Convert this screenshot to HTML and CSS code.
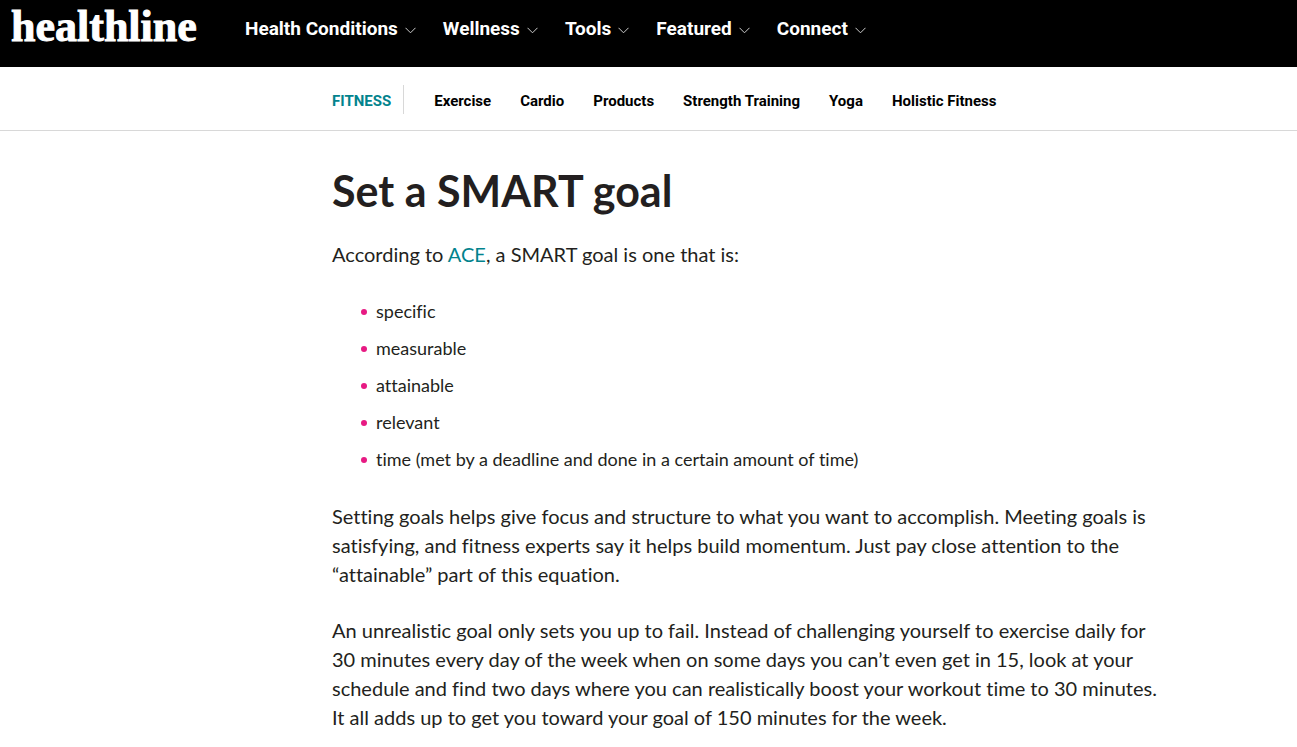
FILE: index.html
```html
<!DOCTYPE html>
<html lang="en">
<head>
<meta charset="utf-8">
<meta name="viewport" content="width=device-width, initial-scale=1">
<title>Set a SMART goal</title>
<link rel="stylesheet" href="styles.css">
</head>
<body>
<header class="site-header">
  <a class="logo" href="#">healthline</a>
  <nav class="main-nav" aria-label="Main">
    <button class="menu" type="button">Health Conditions<svg class="chevron" viewBox="0 0 11 7" aria-hidden="true"><path d="M.5 .8 5.5 5.8 10.5 .8"/></svg></button>
    <button class="menu" type="button">Wellness<svg class="chevron" viewBox="0 0 11 7" aria-hidden="true"><path d="M.5 .8 5.5 5.8 10.5 .8"/></svg></button>
    <button class="menu" type="button">Tools<svg class="chevron" viewBox="0 0 11 7" aria-hidden="true"><path d="M.5 .8 5.5 5.8 10.5 .8"/></svg></button>
    <button class="menu" type="button">Featured<svg class="chevron" viewBox="0 0 11 7" aria-hidden="true"><path d="M.5 .8 5.5 5.8 10.5 .8"/></svg></button>
    <button class="menu" type="button">Connect<svg class="chevron" viewBox="0 0 11 7" aria-hidden="true"><path d="M.5 .8 5.5 5.8 10.5 .8"/></svg></button>
  </nav>
</header>
<nav class="sub-nav" aria-label="Fitness">
  <a class="section" href="#">FITNESS</a>
  <a class="topic" href="#">Exercise</a>
  <a class="topic" href="#">Cardio</a>
  <a class="topic" href="#">Products</a>
  <a class="topic" href="#">Strength Training</a>
  <a class="topic" href="#">Yoga</a>
  <a class="topic" href="#">Holistic Fitness</a>
</nav>
<main class="article">
  <h1 class="title">Set a SMART goal</h1>
  <p class="text">According to <a class="link" href="#">ACE</a>, a SMART goal is one that is:</p>
  <ul class="list">
    <li class="item">specific</li>
    <li class="item">measurable</li>
    <li class="item">attainable</li>
    <li class="item">relevant</li>
    <li class="item">time (met by a deadline and done in a certain amount of time)</li>
  </ul>
  <p class="text">Setting goals helps give focus and structure to what you want to accomplish. Meeting goals is satisfying, and fitness experts say it helps build momentum. Just pay close attention to the “attainable” part of this equation.</p>
  <p class="text">An unrealistic goal only sets you up to fail. Instead of challenging yourself to exercise daily for 30 minutes every day of the week when on some days you can’t even get in 15, look at your schedule and find two days where you can realistically boost your workout time to 30 minutes. It all adds up to get you toward your goal of 150 minutes for the week.</p>
</main>
</body>
</html>
```
FILE: styles.css
```css
* { box-sizing: border-box; }
body {
  margin: 0;
  background: #fff;
  color: #231f20;
  font-family: Lato, "Liberation Sans", sans-serif;
  font-variant-ligatures: none;
}
a { text-decoration: none; }
.site-header {
  display: flex;
  align-items: flex-start;
  height: 67px;
  padding: 4px 11px 0;
  background: #000;
}
.logo {
  width: 234px;
  color: #fff;
  font: bold 44px/46px "Liberation Serif", serif;
  -webkit-text-stroke: 1px #fff;
}
.main-nav {
  display: flex;
  gap: 27px;
  padding-top: 13px;
}
.menu {
  display: flex;
  align-items: center;
  gap: 7px;
  padding: 0;
  border: 0;
  background: none;
  color: #fff;
  font: bold 19px/24px Roboto, sans-serif;
  white-space: nowrap;
}
.chevron {
  width: 11px;
  height: 7px;
  margin-top: 3px;
  fill: none;
  stroke: #ccc;
}
.sub-nav {
  display: flex;
  align-items: center;
  gap: 29px;
  height: 64px;
  padding: 1px 0 0 332px;
  border-bottom: 1px solid #d8d8d8;
  font: bold 15px/26px Roboto, sans-serif;
  white-space: nowrap;
}
.section {
  margin-right: 1px;
  padding: 3px 12px 0 0;
  border-right: 1px solid #d8d8d8;
  color: #02838d;
}
.topic {
  padding-top: 3px;
  color: #000;
}
.article {
  max-width: 1160px;
  padding: 35px 0 16px 332px;
}
.title {
  margin: 0 0 24px;
  font-size: 43px;
  line-height: 50px;
}
.text {
  margin: 0 0 27px;
  font-size: 20px;
  line-height: 29px;
}
.link { color: #02838d; }
.list {
  margin: 30px 0;
  padding: 0 0 0 29px;
  list-style: none;
  font-size: 18px;
  line-height: 25px;
}
.item {
  display: flex;
  align-items: center;
  gap: 9px;
  margin-bottom: 12px;
}
.item::before {
  content: "";
  width: 6px;
  height: 6px;
  border-radius: 50%;
  background: #e71a83;
}
```
